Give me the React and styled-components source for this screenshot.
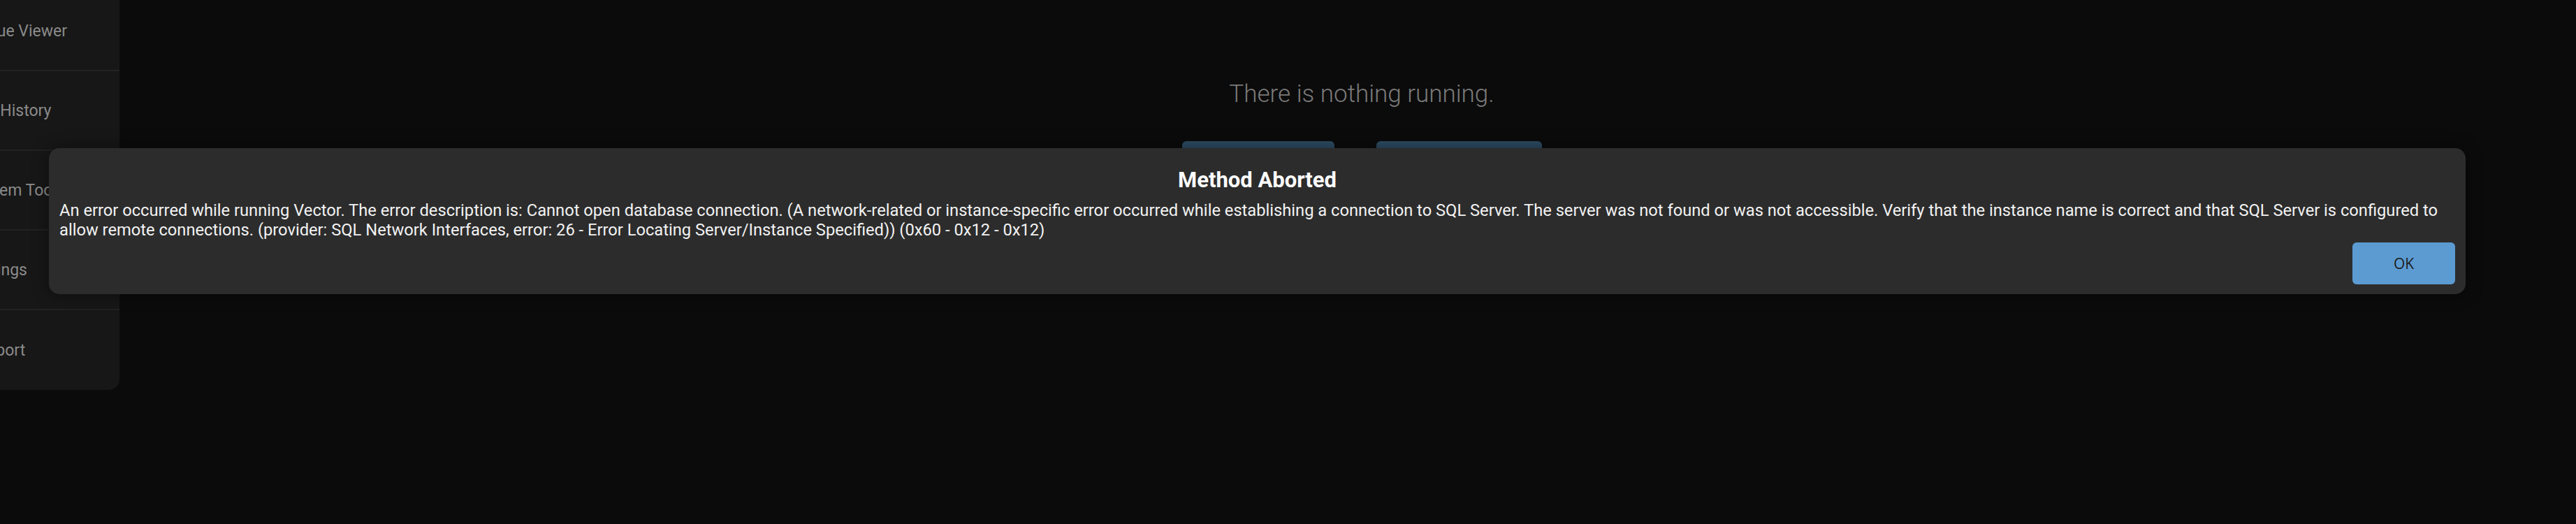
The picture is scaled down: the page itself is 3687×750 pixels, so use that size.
import React from "react";
import styled, { createGlobalStyle } from "styled-components";

const Global = createGlobalStyle`
  html, body { margin: 0; padding: 0; background: #0b0b0b; }
  body { font-family: Roboto, "Liberation Sans", sans-serif; overflow: hidden; }
  * { box-sizing: border-box; }
`;

const Page = styled.div`
  position: relative;
  display: flex;
  width: 3687px;
  height: 750px;
  background: #0b0b0b;
  overflow: hidden;
`;

const SidebarClip = styled.div`
  width: 171px;
  flex: 0 0 171px;
  align-self: flex-start;
  margin-top: -12px;
  overflow: hidden;
  background: #171717;
  border-bottom-right-radius: 15px;
`;

const SidebarInner = styled.nav`
  display: flex;
  flex-direction: column;
  width: 251px;
  margin-left: -80px;
`;

const NavItem = styled.div`
  height: 114px;
  display: flex;
  align-items: center;
  padding-left: 35px;
  font-size: 23px;
  color: #8a8a8a;
  white-space: nowrap;
  border-bottom: ${(p) => (p.$last ? "none" : "2px solid #222222")};
`;

const Main = styled.main`
  flex: 1;
  display: flex;
  flex-direction: column;
  align-items: center;
  padding-top: 113px;
  padding-left: 40px;
`;

const Empty = styled.div`
  font-size: 35px;
  font-weight: 300;
  color: #7a7a7a;
  line-height: 44px;
`;

const ActionRow = styled.div`
  display: flex;
  gap: 60px;
  margin-top: 45px;
`;

const GhostButton = styled.div`
  width: ${(p) => p.$w}px;
  height: 60px;
  border-radius: 6px;
  background: #2d4b63;
`;

const Overlay = styled.div`
  position: absolute;
  inset: 0;
  display: flex;
  align-items: flex-start;
  padding: 212px 158px 0 70px;
`;

const Dialog = styled.div`
  flex: 1;
  background: #2c2c2c;
  border-radius: 15px;
  box-shadow: 0 0 24px rgba(0, 0, 0, 0.45);
  padding: 28px 15px 14px 15px;
  display: flex;
  flex-direction: column;
`;

const Title = styled.h2`
  margin: 0;
  text-align: center;
  font-size: 31px;
  line-height: 36px;
  font-weight: 700;
  color: #ffffff;
`;

const Message = styled.p`
  margin: 11px 0 0 0;
  font-size: 23.7px;
  line-height: 28px;
  color: #f2f2f2;
`;

const Footer = styled.div`
  display: flex;
  justify-content: flex-end;
  margin-top: 4px;
`;

const OkButton = styled.button`
  width: 147px;
  height: 60px;
  border: none;
  border-radius: 6px;
  background: #5b9bd1;
  color: #1d1d1d;
  font-family: "Open Sans", "Noto Sans", sans-serif;
  font-size: 21px;
`;

const navItems = ["Queue Viewer", "Run History", "System Tools", "Settings", "Support"];

export default function App() {
  return (
    <>
      <Global />
      <Page>
        <SidebarClip>
          <SidebarInner>
            {navItems.map((t, i) => (
              <NavItem key={t} $last={i === navItems.length - 1}>
                {t}
              </NavItem>
            ))}
          </SidebarInner>
        </SidebarClip>
        <Main>
          <Empty>There is nothing running.</Empty>
          <ActionRow>
            <GhostButton $w={218} />
            <GhostButton $w={237} />
          </ActionRow>
        </Main>
        <Overlay>
          <Dialog>
            <Title>Method Aborted</Title>
            <Message>
              An error occurred while running Vector. The error description is: Cannot open database
              connection. (A network-related or instance-specific error occurred while establishing a
              connection to SQL Server. The server was not found or was not accessible. Verify that the
              instance name is correct and that SQL Server is configured to allow remote connections.
              (provider: SQL Network Interfaces, error: 26 - Error Locating Server/Instance Specified))
              (0x60 - 0x12 - 0x12)
            </Message>
            <Footer>
              <OkButton>OK</OkButton>
            </Footer>
          </Dialog>
        </Overlay>
      </Page>
    </>
  );
}
